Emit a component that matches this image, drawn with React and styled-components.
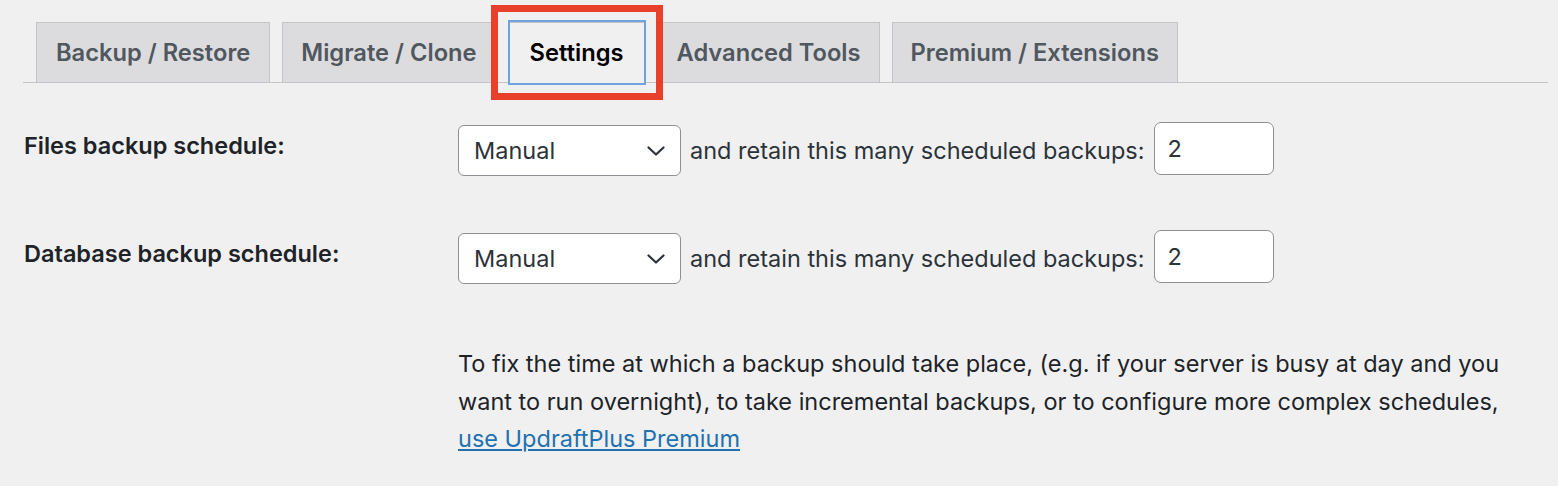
import React from 'react'
import styled, { createGlobalStyle } from 'styled-components'

const GlobalStyle = createGlobalStyle`
    body {
        margin: 0;
        background: #f0f0f1;
        font-family: Inter, "Noto Sans", sans-serif;
        color: #1d2327;
    }
`

const tabs = ['Backup / Restore', 'Migrate / Clone', 'Settings', 'Advanced Tools', 'Premium / Extensions']

function Chevron() {
    return (
        <svg width="18" height="10" viewBox="0 0 18 10" fill="none">
            <path d="M1.5 1.5 L9 8.5 L16.5 1.5" stroke="#2c3338" strokeWidth="2.2" strokeLinecap="round" strokeLinejoin="round" />
        </svg>
    )
}

function ScheduleRow({ label }) {
    return (
        <Row>
            <Label>{label}</Label>
            <Fields>
                <Select>
                    <span>Manual</span>
                    <Chevron />
                </Select>
                <Retain>and retain this many scheduled backups:</Retain>
                <NumberBox>2</NumberBox>
            </Fields>
        </Row>
    )
}

function App() {
    return (
        <Page>
            <GlobalStyle />
            <TabBar>
                {tabs.map((t) => (
                    <Tab key={t} $active={t === 'Settings'}>{t}</Tab>
                ))}
            </TabBar>
            <Form>
                <ScheduleRow label="Files backup schedule:" />
                <ScheduleRow label="Database backup schedule:" />
                <Row>
                    <span />
                    <Note>
                        To fix the time at which a backup should take place, (e.g. if your server is busy at day and you<br />
                        want to run overnight), to take incremental backups, or to configure more complex schedules,<br />
                        <NoteLink href="#">use UpdraftPlus Premium</NoteLink>
                    </Note>
                </Row>
            </Form>
        </Page>
    )
}

export default App


const Page = styled.div`
    padding: 0 10px 0 23px;
    height: 486px;
    box-sizing: border-box;
`


const TabBar = styled.div`
    display: flex;
    align-items: flex-end;
    padding-top: 22px;
    border-bottom: 1px solid #c3c4c7;
`


const Tab = styled.div`
    position: relative;
    box-sizing: border-box;
    height: 61px;
    margin: 0 0 -1px 12px;
    padding: 0 18px;
    display: flex;
    align-items: center;
    border: 1px solid #c3c4c7;
    background: ${(p) => (p.$active ? '#f0f0f1' : '#dcdcde')};
    border-bottom-color: ${(p) => (p.$active ? '#f0f0f1' : '#c3c4c7')};
    color: ${(p) => (p.$active ? '#000' : '#50575e')};
    font-size: 23.7px;
    font-weight: 600;
    white-space: nowrap;

    &:first-child {
        margin-left: 13px;
        padding: 0 19px;
    }

    ${(p) => p.$active && `
        padding: 0 21px;
        &::after {
            content: '';
            position: absolute;
            top: -3px;
            bottom: -3px;
            left: -1px;
            right: -1px;
            border: 2px solid #6fa2de;
        }
        &::before {
            content: '';
            position: absolute;
            top: -18px;
            bottom: -18px;
            left: -18px;
            right: -18px;
            border: 7px solid #e8402a;
            z-index: 2;
        }
    `}
`


const Form = styled.div`
    padding-top: 42px;
`


const Row = styled.div`
    display: grid;
    grid-template-columns: 435px auto;
    align-items: start;
    min-height: 108px;
`


const Label = styled.div`
    padding: 6px 0 0 1px;
    font-size: 23.5px;
    font-weight: 600;
    color: #1d2327;
`


const Fields = styled.div`
    display: flex;
    align-items: center;
    gap: 9px;
`


const Select = styled.div`
    box-sizing: border-box;
    width: 223px;
    height: 51px;
    padding: 0 15px 0 15px;
    display: flex;
    align-items: center;
    justify-content: space-between;
    background: #fff;
    border: 1px solid #8c8f94;
    border-radius: 6px;
    font-size: 23.5px;
    color: #2c3338;
`


const Retain = styled.span`
    font-size: 23.5px;
    color: #2c3338;
`


const NumberBox = styled.div`
    box-sizing: border-box;
    width: 120px;
    height: 53px;
    margin-top: -5px;
    padding-left: 13px;
    display: flex;
    align-items: center;
    background: #fff;
    border: 1px solid #8c8f94;
    border-radius: 7px;
    font-size: 23.5px;
    color: #2c3338;
`


const Note = styled.p`
    margin: 0;
    padding-top: 4px;
    font-size: 23.5px;
    line-height: 37.5px;
    white-space: nowrap;
    color: #1d2327;
`


const NoteLink = styled.a`
    color: #2271b1;
    text-decoration: underline;
`
